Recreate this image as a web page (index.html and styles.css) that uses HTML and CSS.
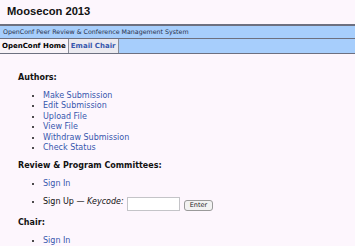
FILE: index.html
```html
<!DOCTYPE html>
<html lang="en">
<head>
    <meta charset="UTF-8">
    <title>Moosecon 2013</title>
    <link rel="stylesheet" href="styles.css">
</head>
<body>
    <h1 class="title">Moosecon 2013</h1>
    <div class="subtitle">OpenConf Peer Review &amp; Conference Management System</div>
    <div class="tabs">
        <span class="tab current">OpenConf Home</span>
        <a class="tab" href="#">Email Chair</a>
    </div>
    <div class="main">
        <h2>Authors:</h2>
        <ul class="links">
            <li><a href="#">Make Submission</a></li>
            <li><a href="#">Edit Submission</a></li>
            <li><a href="#">Upload File</a></li>
            <li><a href="#">View File</a></li>
            <li><a href="#">Withdraw Submission</a></li>
            <li><a href="#">Check Status</a></li>
        </ul>
        <h2>Review &amp; Program Committees:</h2>
        <ul class="links spaced">
            <li><a href="#">Sign In</a></li>
            <li>Sign Up &mdash; <i>Keycode:</i> <input class="keycode" type="text"> <button class="enter">Enter</button></li>
        </ul>
        <h2>Chair:</h2>
        <ul class="links">
            <li><a href="#">Sign In</a></li>
        </ul>
    </div>
</body>
</html>
```

FILE: styles.css
```css
body, h1, h2, ul{
    margin: 0;
    padding: 0;
}
body{
    background: #fdf6fd;
    font-family: "DejaVu Sans", Verdana, sans-serif;
    font-size: 8px;
    color: #111;
}
a{
    color: #3757ad;
    text-decoration: none;
}
.title{
    height: 19px;
    padding: 5px 7px 0;
    font: bold 11.2px "Liberation Sans", Arial, sans-serif;
    color: #111;
}
.subtitle{
    height: 12px;
    line-height: 12px;
    padding-left: 3px;
    background: #a7cefc;
    border-top: 2px solid #6d7080;
    border-bottom: 1px solid #6d7080;
    font-size: 6.3px;
    color: #27304a;
}
.tabs{
    display: flex;
    height: 14px;
    background: #a7cefc;
    border-bottom: 1px solid #6d7080;
}
.tab{
    padding: 0 2px;
    line-height: 14px;
    font-weight: bold;
    font-size: 7px;
    background: #ebeaf0;
    border-right: 1px solid #8a8d99;
}
.tab.current{
    background: #f8f3f8;
    color: #000;
}
.main{
    padding: 18px 0 0 18px;
}
h2{
    font-size: 8px;
    line-height: 11px;
}
.links{
    margin: 8px 0 7px;
    padding-left: 25px;
    line-height: 10.4px;
}
.spaced{
    margin-bottom: 6px;
}
.spaced li + li{
    margin-top: 7px;
}
.keycode{
    width: 53px;
    height: 14px;
    box-sizing: border-box;
    margin: 0 0 0 1px;
    padding: 0;
    border: 1px solid #c4c4c8;
    background: #fff;
    vertical-align: -5px;
}
.enter{
    height: 11px;
    margin: 0 0 0 1px;
    padding: 0 5px;
    font: 6.5px "DejaVu Sans", Verdana, sans-serif;
    line-height: 9px;
    color: #222;
    background: #f2f2f2;
    border: 1px solid #9a9a9a;
    border-radius: 3px;
    vertical-align: -3px;
}
```
